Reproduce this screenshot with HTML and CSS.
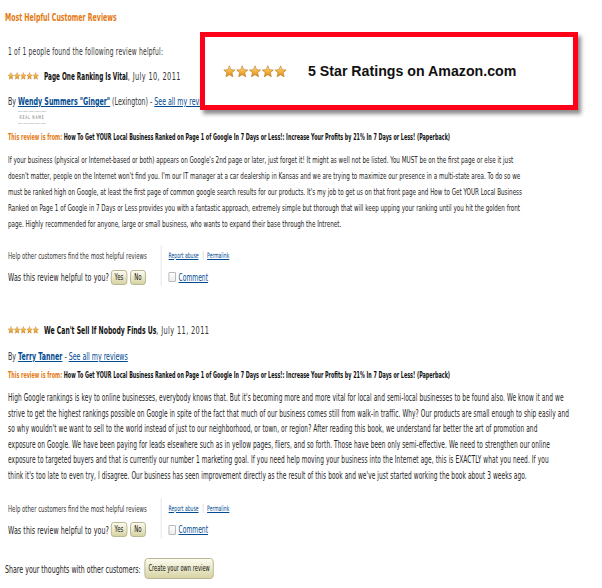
FILE: index.html
```html
<!DOCTYPE html>
<html lang="en">
<head>
<meta charset="utf-8">
<title>Most Helpful Customer Reviews</title>
<link rel="stylesheet" href="styles.css">
</head>
<body>
<div class="frame">
<div class="page">
  <h2 class="section-title">Most Helpful Customer Reviews</h2>

  <div class="review">
    <div class="helpful-count">1 of 1 people found the following review helpful:</div>
    <div class="review-head">
      <svg class="stars" viewBox="0 0 120 24" preserveAspectRatio="none" aria-label="5 out of 5 stars">
        <defs>
          <linearGradient id="g1" x1="0" y1="0" x2="0" y2="1">
            <stop offset="0" stop-color="#fde7a4"/>
            <stop offset="0.5" stop-color="#f4b440"/>
            <stop offset="1" stop-color="#d98a1f"/>
          </linearGradient>
          <polygon id="st1" points="12,1.5 15,8.6 22.5,9.2 16.8,14.2 18.6,21.8 12,17.8 5.4,21.8 7.2,14.2 1.5,9.2 9,8.6" fill="url(#g1)" stroke="#b8741f" stroke-width="1.3" stroke-linejoin="round"/>
        </defs>
        <use href="#st1"/><use href="#st1" x="24"/><use href="#st1" x="48"/><use href="#st1" x="72"/><use href="#st1" x="96"/>
      </svg>
      <b class="review-title">Page One Ranking Is Vital</b><span class="date">, July 10, 2011</span>
    </div>
    <div class="byline">By <a href="#" class="author">Wendy Summers "Ginger"</a> (Lexington) - <a href="#">See all my reviews</a></div>
    <div class="badge">REAL NAME</div>
    <div class="from"><span class="from-label">This review is from:</span> How To Get YOUR Local Business Ranked on Page 1 of Google In 7 Days or Less!: Increase Your Profits by 21% In 7 Days or Less! (Paperback)</div>
    <p class="review-text">If your business (physical or Internet-based or both) appears on Google's 2nd page or later, just forget it! It might as well not be listed. You MUST be on the first page or else it just<br>doesn't matter, people on the Internet won't find you. I'm our IT manager at a car dealership in Kansas and we are trying to maximize our presence in a multi-state area. To do so we<br>must be ranked high on Google, at least the first page of common google search results for our products. It's my job to get us on that front page and How to Get YOUR Local Business<br>Ranked on Page 1 of Google in 7 Days or Less provides you with a fantastic approach, extremely simple but thorough that will keep upping your ranking until you hit the golden front<br>page. Highly recommended for anyone, large or small business, who wants to expand their base through the Intrenet.</p>
    <div class="feedback">
      <div class="feedback-left">
        <div class="help-note">Help other customers find the most helpful reviews</div>
        <div class="vote"><span class="vote-label">Was this review helpful to you?</span><button class="btn btn-yes">Yes</button><button class="btn btn-no">No</button></div>
      </div>
      <div class="feedback-right">
        <div class="links"><a href="#">Report abuse</a><a href="#" class="permalink">Permalink</a></div>
        <div class="comment"><span class="comment-box"></span><a href="#">Comment</a></div>
      </div>
    </div>
  </div>

  <div class="review review-next">
    <div class="review-head">
      <svg class="stars" viewBox="0 0 120 24" preserveAspectRatio="none" aria-label="5 out of 5 stars">
        <use href="#st1"/><use href="#st1" x="24"/><use href="#st1" x="48"/><use href="#st1" x="72"/><use href="#st1" x="96"/>
      </svg>
      <b class="review-title">We Can't Sell If Nobody Finds Us</b><span class="date">, July 11, 2011</span>
    </div>
    <div class="byline">By <a href="#" class="author">Terry Tanner</a> - <a href="#">See all my reviews</a></div>
    <div class="from"><span class="from-label">This review is from:</span> How To Get YOUR Local Business Ranked on Page 1 of Google In 7 Days or Less!: Increase Your Profits by 21% In 7 Days or Less! (Paperback)</div>
    <p class="review-text">High Google rankings is key to online businesses, everybody knows that. But it's becoming more and more vital for local and semi-local businesses to be found also. We know it and we<br>strive to get the highest rankings possible on Google in spite of the fact that much of our business comes still from walk-in traffic. Why? Our products are small enough to ship easily and<br>so why wouldn't we want to sell to the world instead of just to our neighborhood, or town, or region? After reading this book, we understand far better the art of promotion and<br>exposure on Google. We have been paying for leads elsewhere such as in yellow pages, fliers, and so forth. Those have been only semi-effective. We need to strengthen our online<br>exposure to targeted buyers and that is currently our number 1 marketing goal. If you need help moving your business into the Internet age, this is EXACTLY what you need. If you<br>think it's too late to even try, I disagree. Our business has seen improvement directly as the result of this book and we've just started working the book about 3 weeks ago.</p>
    <div class="feedback">
      <div class="feedback-left">
        <div class="help-note">Help other customers find the most helpful reviews</div>
        <div class="vote"><span class="vote-label">Was this review helpful to you?</span><button class="btn btn-yes">Yes</button><button class="btn btn-no">No</button></div>
      </div>
      <div class="feedback-right">
        <div class="links"><a href="#">Report abuse</a><a href="#" class="permalink">Permalink</a></div>
        <div class="comment"><span class="comment-box"></span><a href="#">Comment</a></div>
      </div>
    </div>
  </div>

  <div class="share"><span class="share-label">Share your thoughts with other customers:</span><button class="btn btn-create">Create your own review</button></div>
</div>

<div class="callout">
  <svg class="callout-stars" viewBox="0 0 120 24" preserveAspectRatio="none" aria-label="5 stars">
    <defs>
      <linearGradient id="g2" x1="0" y1="0" x2="0" y2="1">
        <stop offset="0" stop-color="#fde7a4"/>
        <stop offset="0.5" stop-color="#f4b440"/>
        <stop offset="1" stop-color="#d98a1f"/>
      </linearGradient>
      <polygon id="st2" points="12,1.5 15,8.6 22.5,9.2 16.8,14.2 18.6,21.8 12,17.8 5.4,21.8 7.2,14.2 1.5,9.2 9,8.6" fill="url(#g2)" stroke="#b8741f" stroke-width="1.1" stroke-linejoin="round"/>
    </defs>
    <use href="#st2"/><use href="#st2" x="24"/><use href="#st2" x="48"/><use href="#st2" x="72"/><use href="#st2" x="96"/>
  </svg>
  <span class="callout-text">5 Star Ratings on Amazon.com</span>
</div>
</div>
</body>
</html>
```

FILE: styles.css
```css
html, body {
  margin: 0;
  padding: 0;
  background: #fff;
}

/* Fixed capture frame that clips the condensed page */
.frame {
  position: relative;
  width: 602px;
  height: 588px;
  overflow: hidden;
}

/* The review page is a horizontally condensed capture */
.page {
  --s: 0.6;
  box-sizing: border-box;
  width: calc(598px / var(--s));
  padding: 10px 0 0 calc(5px / var(--s));
  transform: scaleX(var(--s));
  transform-origin: 0 0;
  font-family: "DejaVu Sans", Verdana, sans-serif;
  color: #222;
}

a {
  color: #004b91;
  text-decoration: underline;
}

.section-title {
  margin: 0;
  font-size: 10.4px;
  line-height: 14px;
  font-weight: bold;
  color: #e47911;
}

.review {
  margin-left: calc(3px / var(--s));
}

.review-next {
  margin-top: 36px;
}

.helpful-count {
  margin-top: 21px;
  font-size: 10px;
  letter-spacing: 0.33px;
  line-height: 14px;
  color: #333;
}

.review-head {
  margin-top: 9px;
  height: 16px;
  display: flex;
  align-items: center;
  white-space: nowrap;
}

.review-next .review-head {
  margin-top: 0;
}

.stars {
  width: calc(31px / var(--s));
  height: 8px;
  margin-right: calc(5px / var(--s));
  flex: none;
}

.review-title {
  font-size: 9.6px;
  font-weight: bold;
  color: #111;
}

.review-next .review-title {
  font-size: 10.2px;
}

.date {
  font-size: 11px;
  letter-spacing: 0.6px;
  color: #333;
}

.byline {
  margin-top: 10px;
  font-size: 10.5px;
  line-height: 14px;
  color: #333;
  white-space: nowrap;
}

.review-next .byline {
  margin-top: 11px;
}

.author {
  font-weight: bold;
}

.badge {
  margin: 3px 0 0 calc(10px / var(--s));
  width: calc(28px / var(--s));
  height: 11px;
  border-top: 1px dotted #b5b5b5;
  border-bottom: 1px dotted #b5b5b5;
  font-size: 5px;
  line-height: 11px;
  letter-spacing: 1.4px;
  text-align: center;
  color: #777;
}

.from {
  margin-top: 7px;
  font-size: 8.1px;
  line-height: 12px;
  font-weight: bold;
  color: #111;
  white-space: nowrap;
}

.review-next .from {
  margin-top: 6px;
}

.from-label {
  color: #e47911;
}

.review-text {
  margin: 9px 0 0;
  font-size: 9.4px;
  line-height: 16px;
  color: #222;
  white-space: nowrap;
}

.review-next .review-text {
  font-size: 9.8px;
  letter-spacing: 0.12px;
  line-height: 15.6px;
}

.feedback {
  margin-top: 13px;
  display: flex;
}

.review-next .feedback {
  margin-top: 14px;
}

.feedback-left {
  width: calc(153px / var(--s));
  padding-top: 5px;
}

.help-note {
  font-size: 9px;
  line-height: 12px;
  color: #333;
  white-space: nowrap;
}

.vote {
  margin-top: 6px;
  height: 18px;
  display: flex;
  align-items: center;
  white-space: nowrap;
}

.vote-label {
  font-size: 10.5px;
  letter-spacing: 0.15px;
  color: #222;
}

.btn {
  box-sizing: border-box;
  height: 15px;
  padding: 0;
  border: 1px solid #a8a479;
  border-radius: 4px;
  background: linear-gradient(#fbfaee, #e9e7c6 55%, #d6d3a4);
  font-family: "DejaVu Sans", Verdana, sans-serif;
  font-size: 9px;
  line-height: 13px;
  color: #111;
  cursor: pointer;
}

.btn-yes {
  width: calc(16px / var(--s));
  margin-left: calc(2px / var(--s));
}

.btn-no {
  width: calc(16px / var(--s));
  margin-left: calc(3px / var(--s));
}

.feedback-right {
  border-left: 1px solid #d8d8d8;
  padding: 5px 0 0 calc(7px / var(--s));
}

.links {
  font-size: 7.5px;
  line-height: 12px;
  white-space: nowrap;
}

.permalink {
  margin-left: calc(4px / var(--s));
  padding-left: calc(4px / var(--s));
  border-left: 1px solid #ccc;
}

.comment {
  margin-top: 6px;
  height: 18px;
  display: flex;
  align-items: center;
  font-size: 10px;
}

.comment-box {
  box-sizing: border-box;
  width: calc(7px / var(--s));
  height: 10px;
  margin-right: calc(3px / var(--s));
  border: 1px solid #aaa;
  border-radius: 1px;
  background: linear-gradient(#fff, #ececec);
}

.share {
  margin-top: 19px;
  height: 22px;
  display: flex;
  align-items: center;
  white-space: nowrap;
}

.share-label {
  font-size: 10.5px;
  color: #222;
}

.btn-create {
  width: calc(69px / var(--s));
  height: 21px;
  margin-left: calc(4px / var(--s));
  font-size: 8.6px;
  border-radius: 5px;
}

/* Red callout laid over the page */
.callout {
  position: absolute;
  left: 200px;
  top: 32px;
  box-sizing: border-box;
  width: 378px;
  height: 78px;
  border: 5px solid #ff0019;
  background: #fff;
  box-shadow: 3px 4px 4px rgba(0, 0, 0, 0.45);
  display: flex;
  align-items: center;
  padding-left: 18px;
}

.callout-stars {
  width: 64px;
  height: 13px;
  flex: none;
}

.callout-text {
  margin-left: 21px;
  font-family: "Liberation Sans", Arial, sans-serif;
  font-weight: bold;
  font-size: 14.2px;
  color: #111;
}
```
